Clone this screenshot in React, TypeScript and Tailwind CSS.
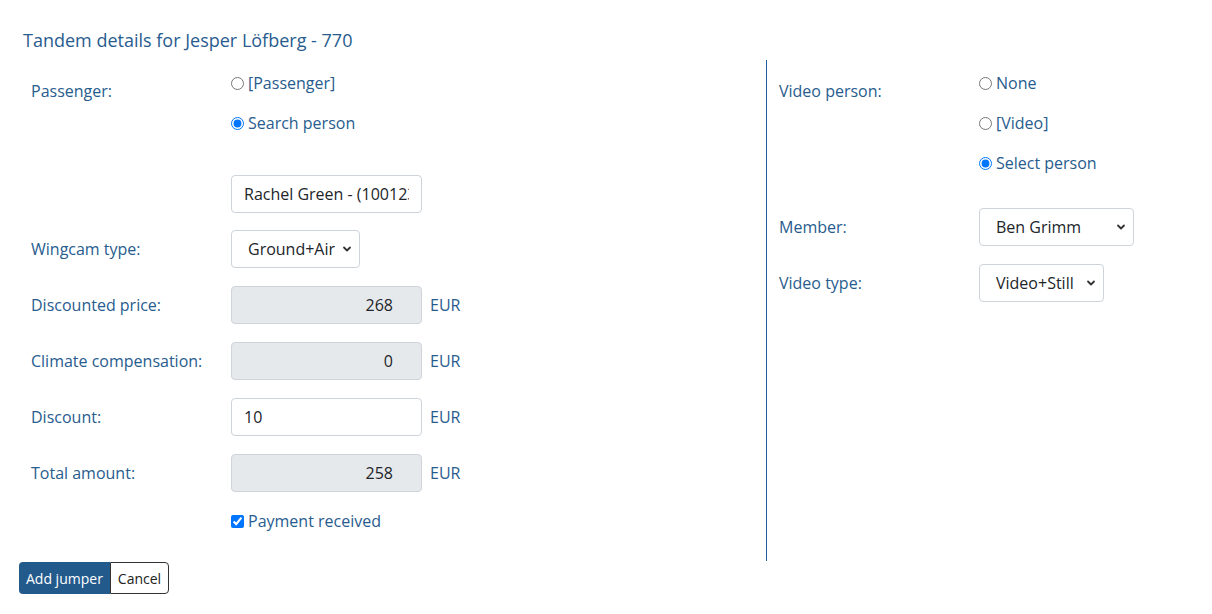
import { useState } from "react";

const label = "text-[16px] text-[#285c8e]";
const input =
  "h-[38px] rounded-[4px] border border-[#ced4da] px-3 text-[16px] text-[#212529] outline-none";

function Chevron() {
  return (
    <svg
      className="pointer-events-none absolute right-[8px] top-1/2 h-[10px] w-[10px] -translate-y-1/2 text-[#333]"
      viewBox="0 0 10 10"
      fill="none"
      stroke="currentColor"
      strokeWidth={1.8}
      strokeLinecap="round"
      strokeLinejoin="round"
    >
      <path d="M2 3.5l3 3 3-3" />
    </svg>
  );
}

function Select({ value, width }: { value: string; width: string }) {
  return (
    <div className={`relative ${width}`}>
      <select
        defaultValue={value}
        className="h-[38px] w-full appearance-none rounded-[4px] border border-[#ced4da] bg-white pl-4 pr-6 text-[16px] text-[#212529] outline-none"
      >
        <option>{value}</option>
      </select>
      <Chevron />
    </div>
  );
}

function Radio({ text, checked, name }: { text: string; checked?: boolean; name: string }) {
  return (
    <label className="flex h-10 items-center gap-[4px] text-[16px] text-[#285c8e]">
      <input type="radio" name={name} defaultChecked={checked} className="m-0 h-[13px] w-[13px]" />
      {text}
    </label>
  );
}

function Row({ name, children, h = "h-[56px]" }: { name: string; children: React.ReactNode; h?: string }) {
  return (
    <div className={`flex ${h} items-center`}>
      <div className={`w-[200px] shrink-0 ${label}`}>{name}</div>
      <div className="flex items-center">{children}</div>
    </div>
  );
}

function Amount({ value, disabled }: { value: string; disabled?: boolean }) {
  return (
    <div className="flex items-center gap-2">
      <input
        defaultValue={value}
        disabled={disabled}
        className={`${input} w-[191px] ${disabled ? "bg-[#e6e9ec] pr-7 text-right" : "bg-white"}`}
      />
      <span className={label}>EUR</span>
    </div>
  );
}

export default function App() {
  const [paid, setPaid] = useState(true);
  return (
    <div className="min-h-[614px] bg-white pl-[19px] pt-[28px] font-['Open_Sans',sans-serif]">
      <h1 className="mb-2 pl-1 text-[18px] leading-6 text-[#285c8e]">
        Tandem details for Jesper Löfberg - 770
      </h1>
      <div className="flex">
        <div className="w-[748px] border-r border-[#1f5f9a] pb-5 pl-3 pt-[3px]">
          <div className="flex">
            <div className={`flex h-[56px] w-[200px] items-center ${label}`}>Passenger:</div>
            <div>
              <Radio name="p" text="[Passenger]" />
              <Radio name="p" text="Search person" checked />
            </div>
          </div>
          <div className="h-[23px]" />
          <Row name="" h="h-[55px]">
            <input defaultValue="Rachel Green - (100123)" className={`${input} w-[191px] bg-white`} />
          </Row>
          <Row name="Wingcam type:">
            <Select value="Ground+Air" width="w-[129px]" />
          </Row>
          <Row name="Discounted price:">
            <Amount value="268" disabled />
          </Row>
          <Row name="Climate compensation:">
            <Amount value="0" disabled />
          </Row>
          <Row name="Discount:">
            <Amount value="10" />
          </Row>
          <Row name="Total amount:">
            <Amount value="258" disabled />
          </Row>
          <div className="flex h-10 items-center pl-[200px]">
            <label className="flex items-center gap-[4px] text-[16px] text-[#285c8e]">
              <input
                type="checkbox"
                checked={paid}
                onChange={() => setPaid(!paid)}
                className="m-0 h-[13px] w-[13px]"
              />
              Payment received
            </label>
          </div>
        </div>
        <div className="flex-1 pl-3 pt-[3px]">
          <div className="flex">
            <div className={`flex h-[56px] w-[200px] items-center ${label}`}>Video person:</div>
            <div>
              <Radio name="v" text="None" />
              <Radio name="v" text="[Video]" />
              <Radio name="v" text="Select person" checked />
            </div>
          </div>
          <div className="h-4" />
          <Row name="Member:">
            <Select value="Ben Grimm" width="w-[155px]" />
          </Row>
          <Row name="Video type:">
            <Select value="Video+Still" width="w-[125px]" />
          </Row>
        </div>
      </div>
      <div className="mt-[1px] flex">
        <button className="h-8 rounded-l-[4px] bg-[#235a8c] px-[7px] text-[14px] text-white">Add jumper</button>
        <button className="h-8 rounded-r-[4px] border border-[#333] bg-white px-[7px] text-[14px] text-[#222]">
          Cancel
        </button>
      </div>
    </div>
  );
}
